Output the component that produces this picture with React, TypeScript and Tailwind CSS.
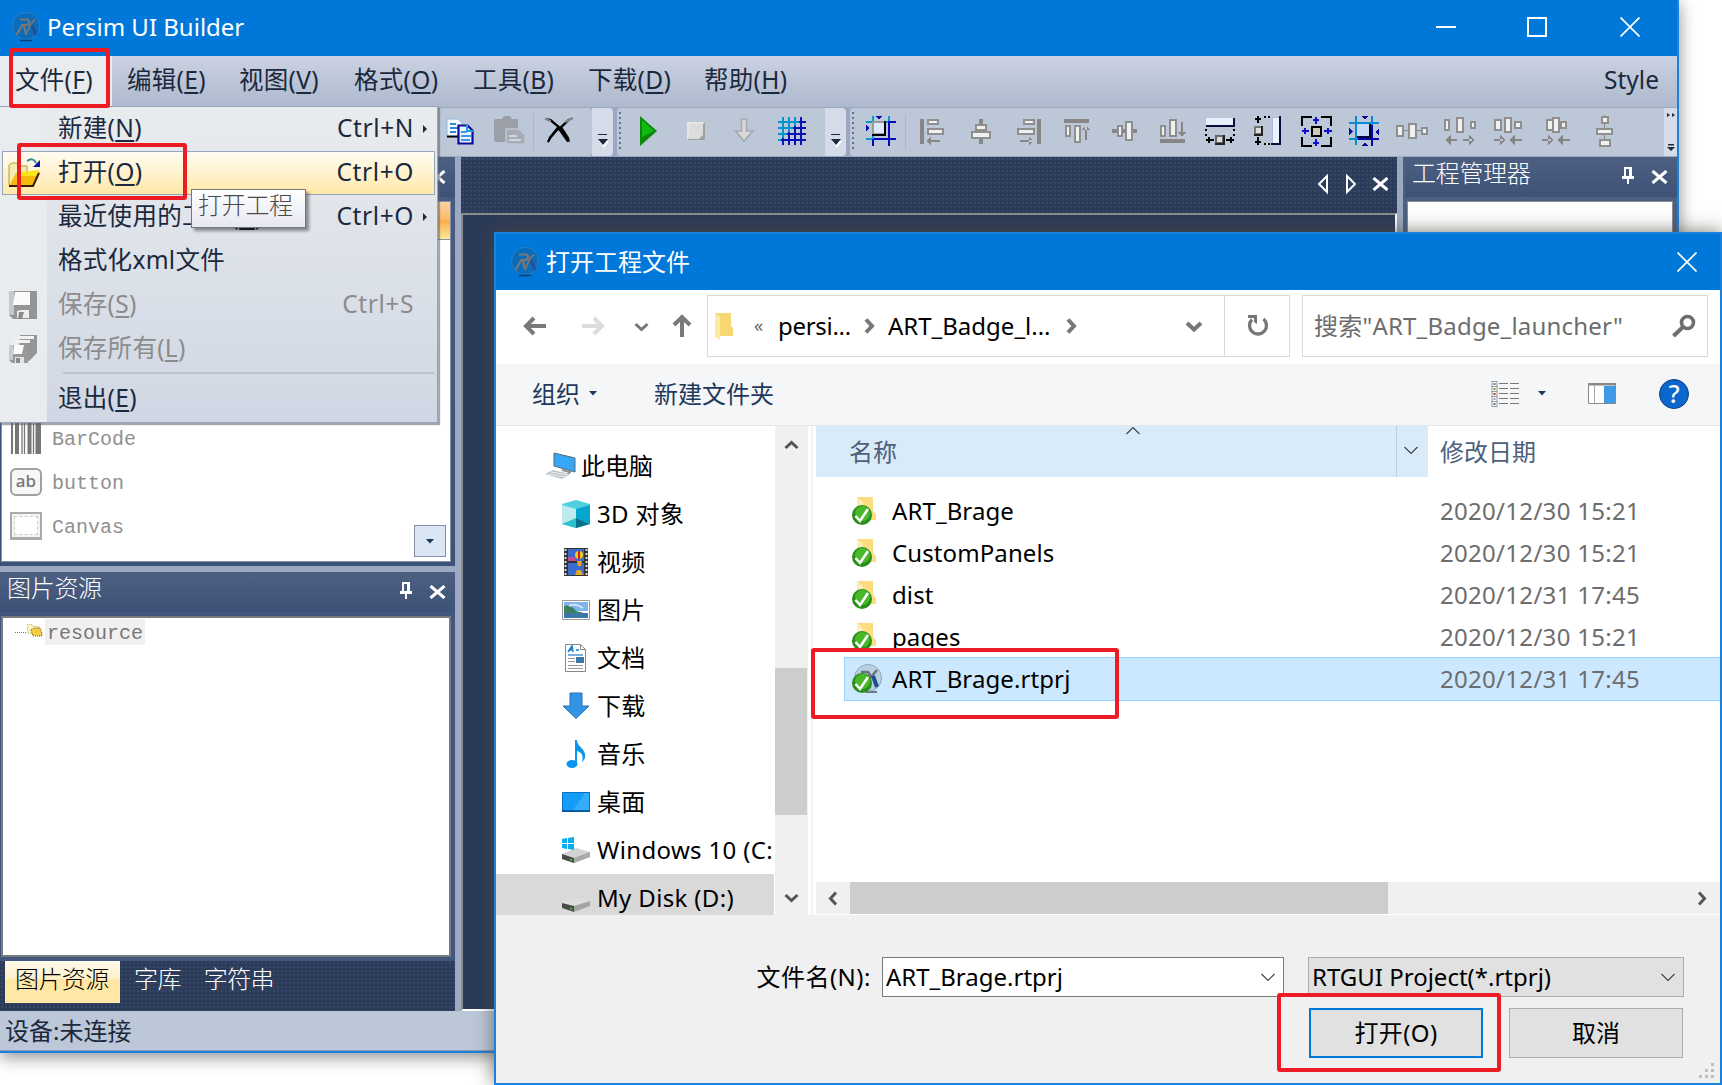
import React from 'react';

type P = { children?: React.ReactNode; className?: string };

const Svg = ({ w = 32, h = 32, className = '', children }: { w?: number; h?: number } & P) => (
  <svg width={w} height={h} viewBox={`0 0 ${w} ${h}`} fill="none" className={`block shrink-0 ${className}`}>
    {children}
  </svg>
);

const RedBox = ({ className = '' }: P) => (
  <div className={`pointer-events-none absolute rounded-[3px] border-4 border-[#ed1c24] ${className}`} />
);

const Logo = () => (
  <Svg w={30} h={30}>
    <circle cx="15" cy="14" r="13.6" fill="#0a6cbd" stroke="#2d7fc0" strokeWidth="1" />
    <path d="M9 28.500h12" stroke="#06335e" strokeWidth="1.600" opacity=".8" />
    <path d="M9 7.500h7c3 0 3 5-1 5.500h-3.500M11.500 12.500L5.500 23M13 14l2 8" stroke="#7d7672" strokeWidth="2.200" />
    <path d="M14.500 23c3-4 4-13 10-15.500" stroke="#7d7672" strokeWidth="1.800" />
    <path d="M21 13l4 10" stroke="#284f92" strokeWidth="2.800" />
  </Svg>
);

const CloseX = () => (
  <Svg w={20} h={20}>
    <path d="M.5.500l19 19M19.500.500l-19 19" stroke="#fff" strokeWidth="1.700" />
  </Svg>
);

const PanelX = () => (
  <Svg w={17} h={14}>
    <path d="M1.500 1l14 12M15.500 1L1.500 13" stroke="#fff" strokeWidth="3" />
  </Svg>
);

const Pin = () => (
  <Svg w={12} h={17} className="[shape-rendering:crispEdges]">
    <path d="M2 0h8v10H2zM4 2v8h3V2z" fill="#fff" fillRule="evenodd" />
    <path d="M0 9h12v3H0zM5 11h2v6H5z" fill="#fff" />
  </Svg>
);

const MenuLabel = ({ t, k }: { t: string; k?: string }) => (
  <span className="pb-[2px] tracking-[0.3px] whitespace-nowrap">
    {t}
    {k && (
      <>
        (<span className="underline decoration-2 underline-offset-[3px]">{k}</span>)
      </>
    )}
  </span>
);

const menus = [
  { t: '文件', k: 'F', c: 'w-[112px] pl-[15px] bg-[#e9ecee]' },
  { t: '编辑', k: 'E', c: 'w-[112px] pl-[15px]' },
  { t: '视图', k: 'V', c: 'w-[115px] pl-[15px]' },
  { t: '格式', k: 'O', c: 'w-[119px] pl-[15px]' },
  { t: '工具', k: 'B', c: 'w-[115px] pl-[15px]' },
  { t: '下载', k: 'D', c: 'w-[116px] pl-[15px]' },
  { t: '帮助', k: 'H', c: 'w-[120px] pl-[15px]' },
];

/* ---------- toolbar icons ---------- */
const Copy = () => (
  <Svg>
    <path d="M2 4h11l4 4v14H2z" fill="#f4f8ff" stroke="#8fb4dc" />
    <path d="M5 9h6M5 13h8M5 17h6" stroke="#2e86d8" strokeWidth="2" />
    <path d="M2 21.500h12" stroke="#000" strokeWidth="2" />
    <path d="M13.500 10.500h9l5 5v13h-14z" fill="#eaf4ff" stroke="#0a0a9a" strokeWidth="2.200" />
    <path d="M22 10v6h6" stroke="#18a0e0" strokeWidth="2" />
    <path d="M16 17h6M16 21h10M16 25h9" stroke="#3d97ea" strokeWidth="2" />
  </Svg>
);
const Paste = () => (
  <Svg w={34}>
    <path d="M4 4h6l2-3h6l2 3h6v23H4q-2 0-2-2V6q0-2 2-2z" fill="#9b9fa8" />
    <path d="M14 14h13l6 6v9H14z" fill="#a6abb5" stroke="#bcc7d8" strokeWidth="1.500" />
    <path d="M17 21h8M17 25h12" stroke="#d0d6e0" strokeWidth="2" />
  </Svg>
);
const DeleteX = () => (
  <Svg>
    <path d="M3 3l5 1 9 7.500L25 4l4-1-9.500 9.500 6.500 10 1 4-3 .5-8.500-12L8.500 23 6 27.500 4 27l2-5 8-10z" fill="#000" />
    <path d="M2 3.500l6 3M30 3l-8 4" stroke="#858585" strokeWidth="2" />
  </Svg>
);
const Play = () => (
  <Svg>
    <path d="M8 1v30l17-15z" fill="#0a8a0a" />
    <path d="M10 5v17l12-6z" fill="#14b814" />
  </Svg>
);
const Stop = () => (
  <Svg>
    <path d="M7 7h18v18H7z" fill="#e6e6e6" />
    <path d="M7 25l5-5h8V12l5-5v18z" fill="#a0a0a0" />
    <path d="M9 9h14v11l-4 4H9z" fill="#dcdcdc" />
  </Svg>
);
const Down = () => (
  <Svg>
    <path d="M13.500 4h5v12h6.500L16 26 7.500 16h6z" fill="#d8d8d8" stroke="#a4a8ae" strokeWidth="1.500" />
  </Svg>
);
const Grid = () => (
  <Svg className="[shape-rendering:crispEdges]">
    <path d="M7 2v28M13 2v28M19 2v28M25 2v28M2 7h28M2 13h28M2 19h28M2 25h28" stroke="#0a94cc" strokeWidth="2" />
    <path d="M25 2v28M19 11v19M13 17v13M7 23v7M30 7h-7M30 13H17M30 19H11M30 25H5" stroke="#0a12b8" strokeWidth="2" />
  </Svg>
);
const g = '#868686';
const Bars = ({ d, rects }: { d?: string; rects: number[][] }) => (
  <Svg className="[shape-rendering:crispEdges]">
    {d && <path d={d} fill={g} />}
    {rects.map(([x, y, w, h], i) => (
      <rect key={i} x={x + 1} y={y + 1} width={w - 2} height={h - 2} fill="#f1f1f1" stroke="#8f8f8f" strokeWidth="2" />
    ))}
  </Svg>
);
const Frame = () => (
  <Svg className="[shape-rendering:crispEdges]">
    <path d="M8 1v29M1 7h30M24 1v8M1 24h9" stroke="#0a9ad0" strokeWidth="2" />
    <path d="M24 7v24M9 24h22M23 7h8M8 24v7" stroke="#0808c0" strokeWidth="2" />
    <path d="M11 1h6l-3 4zM1 10v6l4-3z" fill="#0808c0" />
    <path d="M8 7h12v12H8z" fill="#dcebfc" stroke="#9a9a9a" strokeWidth="2" />
    <path d="M20 6v14H7" stroke="#000" strokeWidth="2.500" />
  </Svg>
);
const SameW = () => (
  <Svg className="[shape-rendering:crispEdges]">
    <path d="M2 3h27v8H2z" fill="#e6effc" />
    <path d="M2 11h28V3" stroke="#05103c" strokeWidth="2" />
    <path d="M2 14v8M30 14v8" stroke="#000" strokeWidth="2" strokeDasharray="2 3" />
    <path d="M2 25h8M22 25h8M5 22v6M27 22v6" stroke="#000" strokeWidth="2" />
    <path d="M12 21h7v7h-7z" fill="#ddd" stroke="#666" strokeWidth="2" />
    <path d="M20 20v9h-9" stroke="#222" strokeWidth="2" />
  </Svg>
);
const SameH = () => (
  <Svg className="[shape-rendering:crispEdges]">
    <path d="M20 2h8v27h-8z" fill="#eaf2fd" stroke="#aabedc" />
    <path d="M28 1v28h-9" stroke="#05103c" strokeWidth="2" />
    <path d="M12 2h6M12 29h6" stroke="#000" strokeWidth="2" strokeDasharray="2 2" />
    <path d="M6 1v7M3 4h6M6 22v8M3 27h6" stroke="#000" strokeWidth="2" />
    <path d="M3 12h7v7H3z" fill="#ddd" stroke="#777" strokeWidth="2" />
    <path d="M10 11v9H2" stroke="#222" strokeWidth="2" />
  </Svg>
);
const SameBoth = () => (
  <Svg className="[shape-rendering:crispEdges]">
    <path d="M2 11V2h10M21 2h10v9M31 22v9H21M12 31H2v-9" stroke="#000" strokeWidth="2" />
    <path d="M12 12h9v9h-9z" fill="#cfc8bc" stroke="#000" strokeWidth="2" />
    <path d="M16 2v7M13 5h6M16 24v7M13 28h6M2 16h7M5 13v6M24 16h8M28 13v6" stroke="#1010d0" strokeWidth="2" />
  </Svg>
);
const Center = () => (
  <Svg className="[shape-rendering:crispEdges]">
    <path d="M8 1v29M1 8h30M24 1v10M1 24h10" stroke="#0a8ad4" strokeWidth="2" />
    <path d="M8 8h16v16H8z" fill="#03033a" stroke="#0a8ad4" strokeWidth="2" />
    <path d="M24 10v21M10 24h21" stroke="#0606a8" strokeWidth="2" />
    <path d="M9 9h12v12H9z" fill="#c7d8f4" />
    <path d="M13 1h7l-3 4zM13 31h7l-3-4zM1 13v7l4-3zM31 13v7l-4-3z" fill="#0606a8" />
  </Svg>
);

const AL = () => <Bars d="M4 4h4v25H4zM11 25h13v2H11zM10 26l5-4v8z" rects={[[11, 4, 12, 6], [11, 13, 17, 7]]} />;
const AC = () => <Bars d="M15 4h4v25h-4z" rects={[[11, 9, 12, 7], [7, 16, 20, 8]]} />;
const AR = () => <Bars d="M25 4h4v25h-4zM8 25h13v2H8zM22 26l-5-4v8z" rects={[[11, 4, 12, 6], [5, 13, 18, 7]]} />;
const AT = () => <Bars d="M4 4h25v4H4zM25 11h2v14h-2zM26 10l-4 5h8z" rects={[[5, 10, 6, 12], [14, 10, 7, 18]]} />;
const AM = () => <Bars d="M4 14h25v4H4z" rects={[[9, 10, 6, 12], [17, 6, 8, 20]]} />;
const AB = () => <Bars d="M4 24h25v4H4zM25 7h2v12h-2zM26 22l-4-5h8z" rects={[[4, 10, 6, 12], [13, 4, 8, 18]]} />;
const D1 = () => <Bars d="M0 15h32v1H0z" rects={[[0, 10, 8, 12], [12, 8, 9, 16], [25, 12, 7, 8]]} />;
const arrowsOut = 'M4 24h9v2H4zM1 25l6-5v10zM19 24h9v2h-9zM31 25l-6-5v10z';
const arrowsIn = 'M2 24h9v2H2zM14 25l-6-5v10zM21 24h9v2h-9zM17 25l6-5v10z';
const D2 = () => <Bars d={arrowsOut} rects={[[0, 4, 6, 12], [12, 2, 8, 16], [26, 6, 6, 8]]} />;
const D3 = () => <Bars d={arrowsIn} rects={[[2, 4, 8, 12], [12, 2, 8, 16], [22, 6, 8, 8]]} />;
const D4 = () => <Bars d={arrowsIn} rects={[[6, 4, 8, 12], [20, 6, 7, 8], [12, 2, 8, 16]]} />;
const D5 = () => <Bars d="M16 0h1v32h-1z" rects={[[13, 1, 8, 8], [8, 13, 17, 7], [11, 24, 12, 8]]} />;

const Cell = ({ children, className = '' }: P) => (
  <div className={`flex h-full w-12 shrink-0 items-center justify-center pb-[2px] ${className}`}>{children}</div>
);
const Sep = () => <div className="h-9 w-px shrink-0 bg-[#aeb5c2]" />;
const Overflow = () => (
  <div className="flex h-full w-[21px] shrink-0 flex-col items-center justify-end gap-1 rounded-r bg-[#d5dbe8] pb-2">
    <div className="h-px w-[9px] bg-[#1b293e]" />
    <Svg w={14} h={9}>
      <path d="M3 2h10l-5 7z" fill="#fff" />
      <path d="M2 0h10L7 6z" fill="#1b293e" />
    </Svg>
  </div>
);
const Grip = () => (
  <div className="ml-[2px] h-10 w-[2px] shrink-0 bg-[repeating-linear-gradient(180deg,#5f6f8c_0_2px,transparent_2px_5px)]" />
);

const Toolbar = () => (
  <div className="flex h-[50px] shrink-0 border-y border-[#9aa8c2] bg-[#9aa8c2]">
    <div className="flex w-[592px] items-center justify-end rounded-r bg-[#bcc7d8] pr-[9px]">
      <Cell>
        <Copy />
      </Cell>
      <Cell>
        <Paste />
      </Cell>
      <Sep />
      <Cell className="ml-[1px]">
        <DeleteX />
      </Cell>
    </div>
    <Overflow />
    <div className="ml-1 flex w-[208px] items-center rounded-l bg-[#bcc7d8]">
      <Grip />
      <Cell className="ml-[3px]">
        <Play />
      </Cell>
      <Cell>
        <Stop />
      </Cell>
      <Cell>
        <Down />
      </Cell>
      <Cell>
        <Grid />
      </Cell>
    </div>
    <Overflow />
    <div className="ml-1 flex flex-1 items-center rounded-l bg-[#bcc7d8]">
      <Grip />
      <Cell className="ml-[3px]">
        <Frame />
      </Cell>
      <Sep />
      <Cell className="ml-[2px]">
        <AL />
      </Cell>
      {[AC, AR, AT, AM, AB, SameW, SameH, SameBoth, Center, D1, D2, D3, D4, D5].map((I, i) => (
        <Cell key={i}>
          <I />
        </Cell>
      ))}
    </div>
    <div className="flex w-[13px] flex-col items-center justify-between bg-[#d5dbe8] py-1">
      <Svg w={8} h={6}>
        <path d="M0 1l3 2-3 2zM5 1l3 2-3 2z" fill="#1b293e" />
      </Svg>
      <Svg w={8} h={8}>
        <path d="M1 0h6v1.500H1zM0 3h8L4 7z" fill="#1b293e" />
      </Svg>
    </div>
  </div>
);

const PanelHeader = ({ title }: { title?: string }) => (
  <div className="flex h-10 shrink-0 items-start justify-between bg-gradient-to-b from-[#4d6082] to-[#3d5277] pl-[7px] pr-[9px] font-light text-white">
    <span className="text-[24px] leading-[32px] tracking-[-0.3px]">{title}</span>
    <span className="flex items-center gap-[17px] pt-[10px]">
      <Pin />
      <span className="pt-[2px]">
        <PanelX />
      </span>
    </span>
  </div>
);

const dots = 'bg-[#2b3b58] bg-[radial-gradient(#35486a_0.8px,transparent_1px)] bg-[length:4px_4px]';

const LeftDock = () => (
  <div className="flex w-[455px] shrink-0 flex-col bg-[#43577e]">
    <div className="flex h-[409px] flex-col bg-gradient-to-b from-[#4a5d82] to-[#3b5279]">
      <PanelHeader />
      <div className="mr-[4px] ml-px mt-1 flex h-[361px] flex-col overflow-hidden border border-[#8591a8] bg-white">
        <div className="h-[38px] shrink-0 border-b border-[#8591a8] bg-[linear-gradient(#fcd3a0,#fdbb66_48%,#fcae4c_50%,#fee796)]" />
        <div className="mt-[177px] flex flex-1 flex-col pl-2 font-['Liberation_Mono',monospace] text-[20px] text-[#909090]">
          <div className="flex h-11 shrink-0 items-center gap-[10px]">
            <Svg w={32} h={34}>
              <path d="M2 0v32M26.500 0v32" stroke="#777" strokeWidth="2" />
              <path d="M7 0v32M19.500 0v32M29 0v32" stroke="#777" strokeWidth="4" />
              <path d="M12 0v32M14.500 0v32M23.500 0v32" stroke="#777" strokeWidth="1.300" />
            </Svg>
            <span className="pt-[2px]">BarCode</span>
          </div>
          <div className="flex h-11 shrink-0 items-center gap-[10px]">
            <div className="mb-[2px] flex h-7 w-8 items-center justify-center rounded-md border-2 border-[#a0a0a0] bg-[#f7f7f7] pb-[3px] font-['Noto_Sans',sans-serif] text-[17px] font-medium text-[#777]">
              ab
            </div>
            <span className="pt-[2px]">button</span>
          </div>
          <div className="flex h-11 shrink-0 items-center gap-[10px]">
            <div className="mb-[2px] h-7 w-8 border-2 border-b-[3px] border-[#ababab] bg-[#f4f4f4] p-[2px]">
              <div className="h-full border border-dashed border-[#ccc] bg-white" />
            </div>
            <span className="pt-[2px]">Canvas</span>
          </div>
          <div className="mt-[13px] h-5 w-8 shrink-0 border-t-2 border-[#d5d5d5] bg-[#f0f0f0]" />
        </div>
      </div>
    </div>
    <div className="h-[6px] shrink-0 bg-[#9da9c3]" />
    <div className="flex h-[389px] flex-col">
      <PanelHeader title="图片资源" />
      <div className="mr-[4px] ml-[1px] mt-[4px] h-[341px] border-2 border-[#777b80] bg-white">
        <div className="flex items-center pl-3 pt-[1px]">
          <div className="w-[11px] border-t border-dotted border-[#777]" />
          <Svg w={17} h={15} className="mb-1">
            <path d="M1 1.500h5l1 2h6v7H2z" fill="#fbf4c0" stroke="#c3b46c" strokeDasharray="1 1" />
            <path d="M5 7l3-2h6l2 5v3H7z" fill="#f0cf45" stroke="#7a4d20" strokeDasharray="1 1" />
          </Svg>
          <span className="ml-[2px] h-[26px] bg-[#f0f0f0] px-[2px] font-['Liberation_Mono',monospace] text-[20px] leading-[29px] text-[#777]">
            resource
          </span>
        </div>
      </div>
    </div>
    <div className={`flex h-[50px] items-start pl-[5px] text-[24px] font-light leading-[36px] tracking-[-0.6px] text-white ${dots}`}>
      <span className="h-[42px] w-[115px] bg-[linear-gradient(#fffaec,#fff0c8_42%,#ffe8a6_44%,#ffe8a6)] pl-[10px] text-black">图片资源</span>
      <span className="pl-[14px]">字库</span>
      <span className="pl-[23px]">字符串</span>
    </div>
  </div>
);

const MainWindow = () => (
  <div className="absolute top-0 left-0 flex h-[1053px] w-[1679px] flex-col border-r-2 border-b-2 border-[#1a82dc] bg-[#bcc7d8] shadow-[0_4px_16px_rgba(0,0,0,0.45)]">
    <div className="flex h-14 shrink-0 items-center bg-[#0078d9] pb-[2px] pl-[11px] text-white">
      <Logo />
      <span className="ml-[6px] text-[24px] leading-none">Persim UI Builder</span>
      <div className="ml-auto flex items-center pr-[37px]">
        <div className="h-[2px] w-5 bg-white" />
        <div className="ml-[71px] h-5 w-5 border-2 border-white" />
        <div className="ml-[73px]">
          <CloseX />
        </div>
      </div>
    </div>
    <div className="flex h-[51px] shrink-0 items-stretch bg-gradient-to-b from-[#cad2e2] to-[#aeb9ce] text-[24.5px] leading-none text-[#1b293e]">
      {menus.map((m) => (
        <div key={m.k} className={`flex items-center ${m.c}`}>
          <MenuLabel t={m.t} k={m.k} />
        </div>
      ))}
      <span className="ml-auto flex items-center pr-[18px] pb-[3px]">Style</span>
    </div>
    <Toolbar />
    <div className="flex h-[854px] shrink-0">
      <LeftDock />
      <div className="w-[6px] bg-[#9da9c3]" />
      <div className="flex w-[936px] flex-col">
        <div className={`flex h-14 items-center justify-end pt-[-1px] pr-[8px] pb-[2px] ${dots}`}>
          <Svg w={12} h={20}>
            <path d="M10 2v16L2 10z" stroke="#fff" strokeWidth="2" />
          </Svg>
          <Svg w={12} h={20} className="ml-4">
            <path d="M2 2v16l8-8z" stroke="#fff" strokeWidth="2" />
          </Svg>
          <span className="ml-[15px]">
            <PanelX />
          </span>
        </div>
        <div className="flex-1 border-2 border-[#8a8c8e] border-r-white border-b-white bg-[#2b3a57]" />
      </div>
      <div className="w-[6px] bg-[#9da9c3]" />
      <div className="flex flex-1 flex-col bg-[#4d6082]">
        <div className="pl-[2px]">
          <PanelHeader title="工程管理器" />
        </div>
        <div className="mx-1 mt-1 mb-1 flex-1 border border-[#888c94] bg-white" />
      </div>
    </div>
    <div className="flex flex-1 items-center border-b border-[#8d9cb6] pl-[5px] text-[24px] leading-none text-[#1b293e]">
      <span>设备:未连接</span>
    </div>
  </div>
);

/* ---------- file menu ---------- */
const OpenIcon = () => (
  <Svg w={34} h={30}>
    <path d="M1 7l3-2h6l2 3h7v8l-12 11H1z" fill="#f3ecb0" stroke="#b39c3c" />
    <path d="M1 28l7-13 24-1-6 14z" fill="#f5b80c" />
    <path d="M13 14l19-2-4 6H11z" fill="#fbe31e" />
    <path d="M1 28h24l6-13" stroke="#3a1d00" strokeWidth="2" />
    <path d="M19 3c4-3 7-2 9 2" stroke="#2d8f99" strokeWidth="2" />
    <path d="M32 2v7h-7z" fill="#0a16a0" />
  </Svg>
);
const Floppy = () => (
  <Svg w={30} h={30}>
    <path d="M1 1h28v28H5l-4-4z" fill="#949494" />
    <path d="M1 1h5v24H1z" fill="#c8c8c8" />
    <path d="M7 2h15v13H5z" fill="#fafafa" />
    <path d="M9 21l4-1h8v8H9z" fill="#ececec" />
    <path d="M11 22h5l-2 7h-4z" fill="#8a8a8a" />
  </Svg>
);
const Floppies = () => (
  <Svg w={30} h={30}>
    <path d="M12 1h17v18l-8 8H10z" fill="#959595" />
    <path d="M11 2h15v3H9zM7 6h15v3H5z" fill="#f2f2f2" />
    <path d="M1 11h19v18H4l-3-3z" fill="#999" />
    <path d="M1 11h4v15H1z" fill="#cacaca" />
    <path d="M6 11h10l-2 9H5z" fill="#fafafa" />
    <path d="M7 23h9v6H7z" fill="#e4e4e4" />
    <path d="M8 24h4v5H8z" fill="#8a8a8a" />
  </Svg>
);

type Item = { t: string; k?: string; s?: string; sub?: boolean; off?: boolean; hot?: boolean; icon?: React.ReactNode };
const items: Item[] = [
  { t: '新建', k: 'N', s: 'Ctrl+N', sub: true },
  { t: '打开', k: 'O', s: 'Ctrl+O', hot: true, icon: <OpenIcon /> },
  { t: '最近使用的工程', k: 'R', s: 'Ctrl+O', sub: true },
  { t: '格式化xml文件' },
  { t: '保存', k: 'S', s: 'Ctrl+S', off: true, icon: <Floppy /> },
  { t: '保存所有', k: 'L', off: true, icon: <Floppies /> },
];

const Row = ({ it }: { it: Item }) => (
  <div
    className={`mr-[2px] ml-[2px] flex h-11 shrink-0 items-center border pr-[6px] leading-none ${
      it.hot ? 'border-[#98a6bd] bg-gradient-to-b from-[#fffcf2] to-[#ffe8a6]' : 'border-transparent'
    } ${it.off ? 'text-[#8c8c8c]' : 'text-[#1b293e]'}`}
  >
    <span className="flex w-[55px] shrink-0 pl-[5px]">{it.icon}</span>
    <MenuLabel t={it.t} k={it.k} />
    <span className="ml-auto pb-[2px] tracking-[0.6px]">{it.s}</span>
    <span className="flex w-[14px] shrink-0 justify-end">
      {it.sub && (
        <Svg w={5} h={8}>
          <path d="M0 0v8l4-4z" fill="#1b293e" />
        </Svg>
      )}
    </span>
  </div>
);

const FileMenu = () => (
  <div className="absolute top-[106px] left-0 flex h-[317px] w-[438px] flex-col border border-l-0 border-[#98a4bb] bg-[linear-gradient(90deg,#e9ecee_47px,transparent_47px),linear-gradient(#e9ecee,#d0d7e4)] text-[24.5px] shadow-[2px_2px_1px_rgba(90,95,105,0.55)]">
    {items.map((it) => (
      <Row key={it.t} it={it} />
    ))}
    <div className="mt-[1px] mr-[3px] ml-[63px] h-[2px] shrink-0 bg-[#bec3d0]" />
    <div className="mt-[3px]">
      <Row it={{ t: '退出', k: 'E' }} />
    </div>
  </div>
);

/* ---------- dialog ---------- */
const Chev = ({ d = 'down', c = '#777' }: { d?: 'down' | 'up' | 'left' | 'right'; c?: string }) => {
  const p = { down: 'M1.500 5L7.500 10.500 13.500 5', up: 'M1.500 10L7.500 4.500 13.500 10', left: 'M10 1.500L4.500 7.500 10 13.500', right: 'M5 1.500L10.500 7.500 5 13.500' }[d];
  return (
    <Svg w={15} h={15}>
      <path d={p} stroke={c} strokeWidth="3" />
    </Svg>
  );
};
const NavChev = ({ right = false }: { right?: boolean }) => (
  <Svg w={18} h={18}>
    <path d={right ? 'M6 2.500l6 6.500-6 6.500' : 'M2 6l7 6.500L16 6'} stroke="#777" strokeWidth="4" />
  </Svg>
);
const ThinChev = ({ up = false }: { up?: boolean }) => (
  <Svg w={14} h={9}>
    <path d={up ? 'M.5 8L7 1.500 13.500 8' : 'M.5 1L7 7.500 13.500 1'} stroke="#444" strokeWidth="1.200" />
  </Svg>
);
const Caret = () => (
  <Svg w={8} h={5}>
    <path d="M0 0h8L4 4.500z" fill="#1e395b" />
  </Svg>
);
const Arrow = ({ c, className = '' }: { c: string; className?: string }) => (
  <Svg w={24} h={20} className={className}>
    <path d="M11 2L3 10l8 8M3 10h20" stroke={c} strokeWidth="4" />
  </Svg>
);
const Folder = () => (
  <Svg w={20} h={28}>
    <path d="M1 1h16v13l2 2v8H6z" fill="#f6d774" />
    <path d="M1 1l5 4v23l-5-3z" fill="#ffe9a2" />
  </Svg>
);
const Check = () => (
  <>
    <circle cx="11" cy="19" r="10" fill="#2a8f1a" />
    <circle cx="11.500" cy="17.500" r="7.500" fill="#49b92b" />
    <path d="M4.500 20l4.500 5 8-12" stroke="#fff" strokeWidth="2.600" />
  </>
);
const CheckedFolder = () => (
  <Svg w={32} h={30}>
    <path d="M6 1h16v14l3 3v6H6z" fill="#fbdc7e" />
    <path d="M6 1l6 5v6H6z" fill="#ffedb8" />
    <Check />
  </Svg>
);
const CheckedProj = () => (
  <Svg w={32} h={30}>
    <circle cx="17" cy="14" r="13.500" fill="#b8d0e4" stroke="#90a6b8" />
    <path d="M10 8h7l3 5 6-7" stroke="#6d7278" strokeWidth="2.500" />
    <path d="M22 12l4 11" stroke="#1f4b8f" strokeWidth="4" />
    <path d="M14 28h12" stroke="#6b7c8c" strokeWidth="2" />
    <Check />
  </Svg>
);

const tree: { t: string; i: React.ReactNode }[] = [
  {
    t: '3D 对象',
    i: (
      <>
        <path d="M1 5l14-4 14 4v20l-14 4-14-4z" fill="#4fd0dc" />
        <path d="M1 6l14 4v13L1 25z" fill="#bdebee" />
        <path d="M15 10l14-4v19l-14-6z" fill="#06a5d0" />
        <path d="M1 25l14-6v10z" fill="#2cc0cc" />
        <path d="M15 19l14 6-14 4z" fill="#04728c" />
      </>
    ),
  },
  {
    t: '视频',
    i: (
      <>
        <path d="M3 1h24v28H3z" fill="#333" />
        <path d="M7 2h16v12H7zM7 16h16v12H7z" fill="#3a6cd0" />
        <path d="M4.500 2v26M25.500 2v26" stroke="#ddd" strokeWidth="2" strokeDasharray="2 2" />
        <path d="M7 10h6l3 4H7z" fill="#c74a8c" />
        <circle cx="18" cy="8" r="4" fill="#f3cb1a" />
        <path d="M18 4v8" stroke="#c22" strokeWidth="2" />
        <path d="M16 14h5l-1 5h-3zM14 28l2-5h4l2 5z" fill="#e9a91c" />
      </>
    ),
  },
  {
    t: '图片',
    i: (
      <>
        <path d="M1.500 5.500h27v19h-27z" fill="#fff" stroke="#9a9a9a" />
        <path d="M3 7h24v9H3z" fill="#7eb5e8" />
        <path d="M3 11c2-1 8-1 12 5l8 2H3z" fill="#3c8061" />
        <path d="M3 18h24v5H3z" fill="#3b78a6" />
        <path d="M8 11c4-2 8-2 14 2" stroke="#fff" strokeWidth="2" opacity=".6" />
      </>
    ),
  },
  {
    t: '文档',
    i: (
      <>
        <path d="M4.500 1.500h15l5 5v22h-20z" fill="#fff" stroke="#888" />
        <path d="M19.500 1.500v5h5" stroke="#888" />
        <path d="M7 9l4-6 1 6M9 7h3M15 7h3" stroke="#1979ca" strokeWidth="1.500" />
        <path d="M7 12h15" stroke="#1979ca" strokeWidth="1.200" />
        <path d="M7 15.500h7M7 18.500h7M7 22.500h15M7 25.500h15" stroke="#999" />
        <path d="M15 14h8v6h-8z" fill="#3c76a8" />
      </>
    ),
  },
  { t: '下载', i: <path d="M9 2h12v13h7L15 27.500 2 15h7z" fill="#3393e4" stroke="#2377c0" /> },
  {
    t: '音乐',
    i: (
      <>
        <ellipse cx="11" cy="25" rx="5.500" ry="4" fill="#0a95ee" />
        <path d="M14 1h2c0 7 10 9 8 18-1 2-2 3-3 4 2-7-1-10-5-11v13h-2z" fill="#0a95ee" />
      </>
    ),
  },
  {
    t: '桌面',
    i: (
      <>
        <path d="M1.500 5.500h27v19h-27z" fill="#139df8" stroke="#0a6fc0" />
        <path d="M12 23L24 6h4v17z" fill="#35adff" />
        <path d="M1 24h28" stroke="#064d8c" strokeWidth="1.500" />
      </>
    ),
  },
  {
    t: 'Windows 10 (C:)',
    i: (
      <>
        <path d="M1 19l14-6 14 4v5l-16 6-12-4z" fill="#d3d3d3" />
        <path d="M1 19l12 4v5L1 24z" fill="#4b4b4b" />
        <path d="M13 23l16-6v5l-16 6z" fill="#a9a9a9" />
        <path d="M1 4l5-1v5H1zM7 3l6-1v6H7zM1 9h5v5l-5-1zM7 9h6v6l-6-1z" fill="#0aaef0" />
        <path d="M9 24.500l2 .6" stroke="#3d3" strokeWidth="1.500" />
      </>
    ),
  },
  {
    t: 'My Disk (D:)',
    i: (
      <>
        <path d="M1 20l14-5 14 3v5l-16 6-12-4z" fill="#dedede" />
        <path d="M1 20l12 3v6L1 25z" fill="#4b4b4b" />
        <path d="M13 23l16-5v5l-16 6z" fill="#a4a4a4" />
        <path d="M9 25.500l2 .6" stroke="#3d3" strokeWidth="1.500" />
      </>
    ),
  },
];

const files = [
  { n: 'ART_Brage', d: '2020/12/30 15:21' },
  { n: 'CustomPanels', d: '2020/12/30 15:21' },
  { n: 'dist', d: '2020/12/31 17:45' },
  { n: 'pages', d: '2020/12/30 15:21' },
];

const Dialog = () => (
  <div className="absolute top-[232px] left-[494px] flex h-[853px] w-[1228px] flex-col border-2 border-[#1a82dc] bg-white text-[24px] leading-none text-black shadow-[0_0_18px_rgba(80,75,65,0.75)]">
    <div className="flex h-14 shrink-0 items-center bg-[#0078d9] pr-[23px] pb-px pl-[14px] text-white">
      <Logo />
      <span className="ml-[6px]">打开工程文件</span>
      <span className="ml-auto">
        <CloseX />
      </span>
    </div>

    <div className="flex h-[74px] shrink-0 items-start pt-[5px] pl-[27px]">
      <div className="flex h-[62px] w-[184px] items-center">
        <Arrow c="#7a7a7a" />
        <Arrow c="#dcdcdc" className="ml-[34px] rotate-180" />
        <span className="ml-[29px]">
          <Chev />
        </span>
        <Arrow c="#7a7a7a" className="ml-[21px] rotate-90" />
      </div>
      <div className="flex h-[62px] w-[583px] border border-[#d9d9d9]">
        <div className="flex w-[517px] items-center border-r border-[#d9d9d9] pl-[6px]">
          <Folder />
          <span className="ml-[20px] w-[24px] pb-[3px] text-[18px] text-[#666]">«</span>
          <span className="w-[82px] tracking-[-0.3px]">persi...</span>
          <NavChev right />
          <span className="ml-[10px] w-[174px]">ART_Badge_l...</span>
          <NavChev right />
          <span className="ml-auto pr-[21px]">
            <NavChev />
          </span>
        </div>
        <div className="flex flex-1 items-center justify-center pl-[2px]">
          <Svg w={22} h={24}>
            <path d="M5 5.500A8.500 8.500 0 1 0 16.500 5" stroke="#777" strokeWidth="3.300" />
            <path d="M1 1h9v9l-3-2V4H1z" fill="#777" />
          </Svg>
        </div>
      </div>
      <div className="ml-3 flex h-[62px] w-[406px] items-center border border-[#d9d9d9] pr-[11px] pl-[11px] tracking-[0.2px] text-[#6d6d6d]">
        搜索"ART_Badge_launcher"
        <Svg w={24} h={24} className="ml-auto">
          <circle cx="15.500" cy="8.500" r="6" stroke="#6d6d6d" strokeWidth="3.600" />
          <path d="M11.500 12.500L1.500 22" stroke="#6d6d6d" strokeWidth="4" />
        </Svg>
      </div>
    </div>

    <div className="flex h-[62px] shrink-0 items-center border-b border-[#e5e7ea] bg-[#f5f6f7] pb-[2px] pl-9 text-[#1e395b]">
      <span className="mr-[9px]">组织</span>
      <Caret />
      <span className="ml-[57px]">新建文件夹</span>
      <div className="ml-auto flex items-center pr-[31px]">
        <Svg w={28} h={28}>
          {[1, 6, 11, 16, 21].map((y, i) => (
            <g key={y}>
              <rect x="1" y={y + 0.5} width="5" height="5" fill="#fff" stroke="#999" />
              <rect x="2.500" y={y + 2} width="2" height="2" fill={['#3a8a9a', '#7a9a3a', '#c03010', '#8ab', '#3a7a9a'][i]} />
              <path d={`M8 ${y + 2.5}h9M19 ${y + 2.5}h9`} stroke="#777" />
            </g>
          ))}
        </Svg>
        <span className="ml-[19px]">
          <Caret />
        </span>
        <Svg w={28} h={22} className="ml-[42px]">
          <path d="M.5.500h27v20H.5z" fill="#fff" stroke="#888" />
          <path d="M0 1.500h28" stroke="#888" strokeWidth="2" />
          <path d="M6.500 2v18" stroke="#aaa" />
          <path d="M16 3h11v17H16z" fill="#3f9ae6" />
        </Svg>
        <span className="ml-[43px] flex h-[30px] w-[30px] items-center justify-center rounded-full border border-[#0a3f80] bg-[#0a67cc] text-[25px] font-medium text-white">
          ?
        </span>
      </div>
    </div>

    <div className="flex h-[489px] shrink-0">
      <div className="w-[278px] overflow-hidden pt-[16px] whitespace-nowrap">
        <div className="flex h-12 items-center pl-[48px]">
          <Svg w={32} h={30}>
            <path d="M10 2l21 5v14l-21-6z" fill="#35a7f6" stroke="#57697a" />
            <path d="M18 19l8 2-3 3" stroke="#8a949c" strokeWidth="2" />
            <path d="M1 23l8-4 17 4-8 5z" fill="#bcc3c8" />
            <path d="M4 23l17 3M7 21l17 3" stroke="#eee" />
          </Svg>
          <span className="ml-[5px]">此电脑</span>
        </div>
        {tree.map((r, i) => (
          <div key={r.t} className={`flex h-12 items-center pl-[65px] ${i === 8 ? 'bg-[#d9d9d9]' : ''}`}>
            <Svg w={30} h={30}>
              {r.i}
            </Svg>
            <span className="ml-[6px] tracking-[0.35px]">{r.t}</span>
          </div>
        ))}
      </div>
      <div className="ml-px flex w-[33px] flex-col items-center bg-[#f0f0f0] pt-[12px] pb-[10px]">
        <Chev d="up" c="#555" />
        <div className="mt-[215px] mr-px h-[147px] w-8 bg-[#cdcdcd]" />
        <span className="mt-auto">
          <Chev c="#555" />
        </span>
      </div>
      <div className="mr-[3px] ml-[3px] w-[2px] bg-[#f3f3f3]" />
      <div className="flex flex-1 flex-col overflow-hidden">
        <div className="flex h-[51px] shrink-0 text-[#4c607a]">
          <div className="flex w-[580px] justify-between bg-[#d9eaf8] pl-[33px]">
            <span className="flex items-center">名称</span>
            <span className="mr-[256px]">
              <ThinChev up />
            </span>
          </div>
          <div className="flex w-8 items-center justify-center border-l border-[#b9d0e4] bg-[#d9eaf8] pr-[4px] pb-[3px]">
            <ThinChev />
          </div>
          <span className="flex items-center pl-[12px]">修改日期</span>
        </div>
        <div className="mt-[13px] flex flex-col">
          {files.map((f, i) => (
            <div key={f.n} className={`flex h-[42px] shrink-0 items-center pl-[35px] ${i === 3 ? '[clip-path:inset(0_0_8px_0)]' : ''}`}>
              <CheckedFolder />
              <span className="ml-[9px] w-[548px] tracking-[0.1px]">{f.n}</span>
              <span className="tracking-[0.3px] text-[#6d6d6d]">{f.d}</span>
            </div>
          ))}
          <div className="-mt-px ml-7 flex h-11 items-center border border-r-0 border-[#99d1ff] bg-[#cce8ff] pl-[6px]">
            <CheckedProj />
            <span className="ml-[9px] w-[548px] tracking-[0.1px]">ART_Brage.rtprj</span>
            <span className="tracking-[0.3px] text-[#6d6d6d]">2020/12/31 17:45</span>
          </div>
        </div>
        <div className="mt-auto mb-px flex h-8 shrink-0 items-center bg-[#f0f0f0] pl-[10px]">
          <Chev d="left" c="#555" />
          <div className="ml-[9px] h-8 w-[538px] bg-[#cdcdcd]" />
          <span className="mr-[11px] ml-auto">
            <Chev d="right" c="#555" />
          </span>
        </div>
      </div>
    </div>

    <div className="flex-1 bg-[#f0f0f0] pt-[42px]">
      <div className="flex h-10 items-center">
        <span className="w-[386px] pr-[11px] text-right tracking-[0.5px]">文件名(N):</span>
        <div className="flex h-10 w-[402px] items-center justify-between border border-[#7a7a7a] bg-white pr-2 pl-[3px]">
          ART_Brage.rtprj
          <ThinChev />
        </div>
        <div className="ml-6 flex h-10 w-[376px] items-center justify-between border border-[#adadad] bg-[#e1e1e1] pr-2 pl-[3px]">
          RTGUI Project(*.rtprj)
          <ThinChev />
        </div>
      </div>
      <div className="mt-[11px] flex pl-[813px]">
        <div className="flex h-[50px] w-[174px] items-center justify-center border-2 border-[#0078d7] bg-[#e1e1e1] tracking-[0.4px]">打开(O)</div>
        <div className="ml-[26px] flex h-[50px] w-[174px] items-center justify-center border border-[#adadad] bg-[#e1e1e1]">取消</div>
      </div>
      <Svg w={18} h={18} className="mt-[4px] ml-auto mr-[4px]">
        <path d="M13 1h3v3h-3zM7 7h3v3H7zM13 7h3v3h-3zM1 13h3v3H1zM7 13h3v3H7zM13 13h3v3h-3z" fill="#bfbfbf" />
      </Svg>
    </div>
  </div>
);

export default function App() {
  return (
    <div className="relative h-[1085px] w-[1722px] overflow-hidden bg-white font-['Noto_Sans','Noto_Sans_CJK_SC',sans-serif]">
      <MainWindow />
      <div className="absolute top-[525px] left-[414px] flex h-8 w-8 items-center justify-center border border-[#8591a8] bg-[#dbe6f4]">
        <Caret />
      </div>
      <FileMenu />
      <Dialog />
      <div className="absolute top-[189px] left-[191px] flex h-[39px] w-[115px] items-start border border-[#767676] bg-gradient-to-b from-white to-[#e6e7f1] pt-[2px] pl-[6px] text-[24px] leading-[26px] font-light tracking-[-0.3px] text-[#4a4a4a] shadow-[3px_3px_3px_rgba(0,0,0,0.4)]">
        打开工程
      </div>
      <RedBox className="top-[48px] left-[9px] h-[60px] w-[101px]" />
      <RedBox className="top-[143px] left-[17px] h-[57px] w-[170px]" />
      <RedBox className="top-[648px] left-[811px] h-[71px] w-[308px]" />
      <RedBox className="top-[993px] left-[1277px] h-[79px] w-[224px]" />
    </div>
  );
}
